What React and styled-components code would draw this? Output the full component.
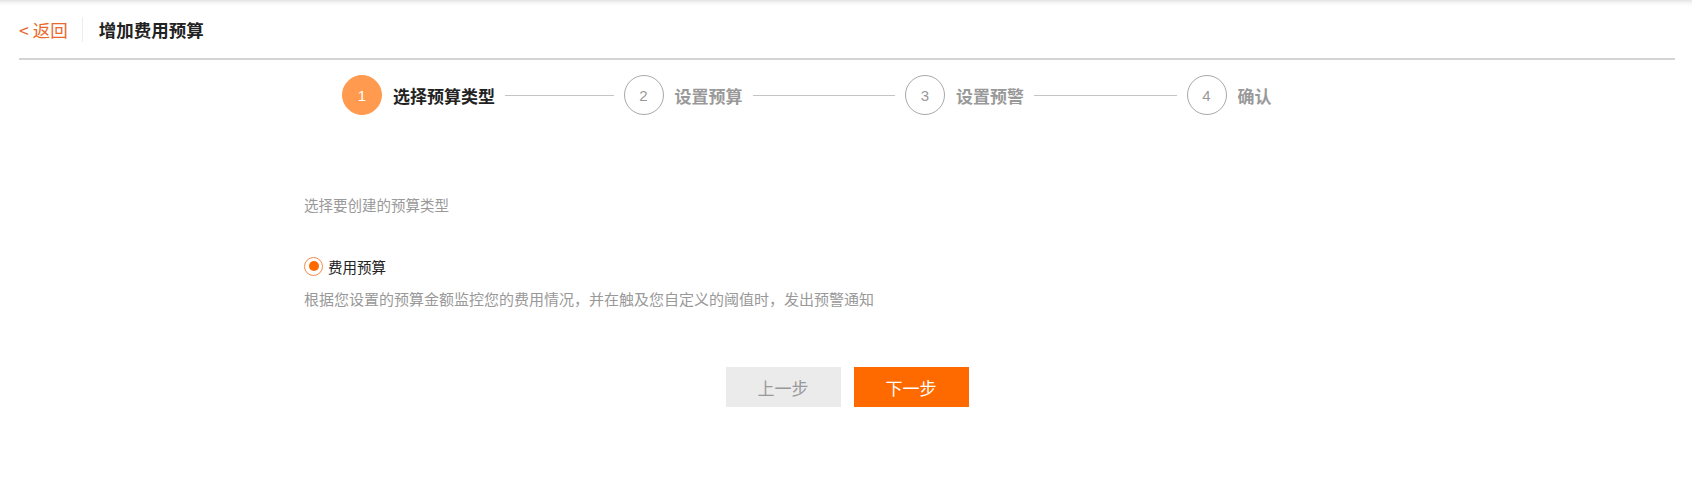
import React from 'react';
import styled, { createGlobalStyle } from 'styled-components';

const GlobalStyle = createGlobalStyle`
  body {
    margin: 0;
    background: #fff;
    font-family: "Noto Sans CJK SC", "Liberation Sans", sans-serif;
  }
`;

const Page = styled.div`
  min-height: 478px;
  padding: 0 17px 0 19px;
  box-sizing: border-box;
  background: linear-gradient(#e4e4e4 0, #f6f6f6 3px, #fff 6px) no-repeat;
`;

const Header = styled.div`
  display: flex;
  align-items: center;
  height: 58px;
  border-bottom: 2px solid #d4d4d4;
`;

const BackLink = styled.a`
  color: #e9692c;
  font-size: 17.5px;
  line-height: 25px;
  padding-right: 14px;
  border-right: 1px solid #ececec;
  cursor: pointer;
  text-decoration: none;
`;

const Title = styled.h1`
  margin: 0 0 0 16px;
  font-size: 17.5px;
  font-weight: 700;
  color: #222;
`;

const Steps = styled.div`
  display: flex;
  margin: 15px 0 0 323px;
`;

const Step = styled.div`
  display: flex;
  align-items: center;
  flex: 0 0 ${(p) => (p.$last ? 'auto' : '281.5px')};
`;

const Circle = styled.div`
  width: 40px;
  height: 40px;
  box-sizing: border-box;
  border-radius: 50%;
  display: flex;
  align-items: center;
  justify-content: center;
  font-family: "Liberation Sans", Arial, sans-serif;
  font-size: 15px;
  background: ${(p) => (p.$active ? '#ff9a4e' : '#fff')};
  border: 1px solid ${(p) => (p.$active ? '#ff9a4e' : '#a8a8a8')};
  color: ${(p) => (p.$active ? '#fff' : '#999')};
`;

const StepLabel = styled.span`
  margin-left: 11px;
  font-size: 17px;
  font-weight: 700;
  white-space: nowrap;
  color: ${(p) => (p.$active ? '#222' : '#999')};
`;

const StepLine = styled.div`
  flex: 1;
  height: 1px;
  background: #c4c4c4;
  margin: 0 10px;
`;

const Content = styled.div`
  padding-left: 285px;
  margin-top: 80px;
`;

const Hint = styled.p`
  margin: 0;
  font-size: 14.5px;
  line-height: 20px;
  color: #999;
`;

const RadioRow = styled.label`
  display: flex;
  align-items: center;
  gap: 5px;
  margin-top: 41px;
  height: 20px;
  font-size: 14.5px;
  color: #222;
  cursor: pointer;
`;

const RadioOuter = styled.span`
  width: 19px;
  height: 19px;
  box-sizing: border-box;
  border-radius: 50%;
  border: 1px solid #f08a4b;
  display: flex;
  align-items: center;
  justify-content: center;
`;

const RadioDot = styled.span`
  width: 10px;
  height: 10px;
  border-radius: 50%;
  background: #ff6a00;
`;

const Description = styled.p`
  margin: 13px 0 0;
  font-size: 15px;
  line-height: 20px;
  color: #999;
`;

const Actions = styled.div`
  display: flex;
  justify-content: center;
  gap: 13px;
  margin-top: 58px;
`;

const Button = styled.button`
  width: 115px;
  height: 40px;
  border: none;
  font-family: inherit;
  font-size: 17px;
  cursor: pointer;
  background: ${(p) => (p.$primary ? '#ff6a00' : '#ebebeb')};
  color: ${(p) => (p.$primary ? '#fff' : '#999')};
`;

const steps = ['选择预算类型', '设置预算', '设置预警', '确认'];

const App = () => {
  return (
    <>
      <GlobalStyle />
      <Page>
        <Header>
          <BackLink>&lt; 返回</BackLink>
          <Title>增加费用预算</Title>
        </Header>
        <Steps>
          {steps.map((label, index) => {
            const last = index === steps.length - 1;
            const active = index === 0;
            return (
              <Step key={label} $last={last}>
                <Circle $active={active}>{index + 1}</Circle>
                <StepLabel $active={active}>{label}</StepLabel>
                {!last && <StepLine />}
              </Step>
            );
          })}
        </Steps>
        <Content>
          <Hint>选择要创建的预算类型</Hint>
          <RadioRow>
            <RadioOuter>
              <RadioDot />
            </RadioOuter>
            费用预算
          </RadioRow>
          <Description>
            根据您设置的预算金额监控您的费用情况，并在触及您自定义的阈值时，发出预警通知
          </Description>
        </Content>
        <Actions>
          <Button>上一步</Button>
          <Button $primary>下一步</Button>
        </Actions>
      </Page>
    </>
  );
};

export default App;
